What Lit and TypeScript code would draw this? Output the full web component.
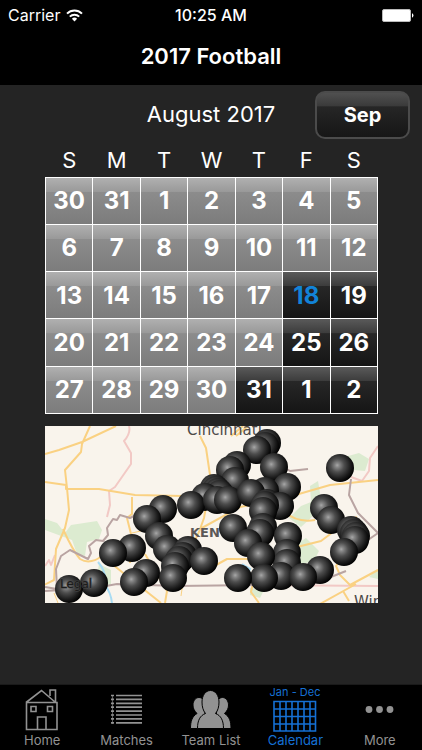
import { LitElement, html, css, svg } from "lit";
import { customElement, property, state } from "lit/decorators.js";
import { classMap } from "lit/directives/class-map.js";

const WEEKDAYS = [
  ["S", "Sunday"], ["M", "Monday"], ["T", "Tuesday"], ["W", "Wednesday"],
  ["T", "Thursday"], ["F", "Friday"], ["S", "Saturday"],
];

const WEEKS = [
  [30, 31, 1, 2, 3, 4, 5],
  [6, 7, 8, 9, 10, 11, 12],
  [13, 14, 15, 16, 17, 18, 19],
  [20, 21, 22, 23, 24, 25, 26],
  [27, 28, 29, 30, 31, 1, 2],
];

// Week and weekday of every date that has matches.
const MATCH_DAYS = new Set(["2-5", "2-6", "3-5", "3-6", "4-4", "4-5", "4-6"]);
const TODAY = "2-5";

// Venue pins, back to front.
const PINS: Array<[number, number]> = [
  [222, 17], [220, 20], [212, 24], [229, 41], [192, 39], [185, 44], [190, 55],
  [295, 42], [169, 62], [171, 64], [173, 66], [175, 68], [160, 71], [146, 79],
  [172, 74], [183, 74], [242, 61], [220, 65], [206, 67], [222, 77], [235, 80],
  [220, 79], [218, 85], [118, 83], [102, 93], [114, 110], [122, 123],
  [218, 101], [215, 107], [188, 102], [203, 117], [243, 110], [242, 127],
  [242, 137], [216, 130], [87, 122], [68, 127], [143, 124], [138, 130],
  [134, 134], [130, 140], [159, 135], [128, 152], [101, 147], [89, 156],
  [236, 150], [219, 152], [193, 152], [275, 144], [258, 151], [279, 82],
  [286, 94], [306, 104], [309, 107], [311, 110], [310, 114], [299, 126],
  [49, 157], [24, 163],
];

@customElement("status-bar")
export class StatusBar extends LitElement {
  static styles = css`
    :host {
      display: grid;
      grid-template-columns: 1fr auto 1fr;
      align-items: center;
      height: 30px;
      padding: 0 8px;
      font-size: 16px;
    }
    .carrier { display: flex; align-items: center; gap: 6px; }
    .time { font-weight: 500; }
    .battery { justify-self: end; }
    svg { display: block; }
  `;
  render() {
    return html`
      <span class="carrier">Carrier
        <svg width="17" height="13" viewBox="0 0 17 13" fill="none" stroke="#fff" stroke-width="2" role="img" aria-label="Wi-Fi">
          <path d="M1 4.6A10.6 10.6 0 0 1 16 4.6" />
          <path d="M3.8 7.6A6.8 6.8 0 0 1 13.2 7.6" />
          <path d="M8.5 12.4 5.9 9.8a3.7 3.7 0 0 1 5.2 0z" fill="#fff" stroke="none" />
        </svg>
      </span>
      <span class="time">10:25 AM</span>
      <svg class="battery" width="32" height="13" viewBox="0 0 32 13" role="img" aria-label="Battery full">
        <rect x="0.5" y="0.5" width="28" height="12" rx="1.5" fill="#fff" stroke="#bbb" stroke-width="1" />
        <path d="M30 4.3a2.4 2.4 0 0 1 0 4.4z" fill="#fff" />
      </svg>
    `;
  }
}

@customElement("month-calendar")
export class MonthCalendar extends LitElement {
  static styles = css`
    :host { display: block; padding: 0 44px 0 45px; }
    table {
      width: 100%;
      height: 275px;
      border-collapse: collapse;
      table-layout: fixed;
    }
    th {
      height: 38px;
      padding: 0 0 5px;
      box-sizing: border-box;
      font-size: 22px;
      font-weight: 400;
      vertical-align: bottom;
      line-height: 24px;
    }
    td { padding: 0; border: 1px solid #fff; height: 46px; }
    .day {
      display: block;
      width: 100%;
      height: 100%;
      margin: 0;
      padding: 0;
      border: 0;
      color: #fff;
      font: inherit;
      font-size: 24px;
      font-weight: 700;
      background: linear-gradient(#b0b0b0, #999 30%, #8c8c8c 31%, #7c7c7c);
    }
    .day.active { background: linear-gradient(#5a5a5a, #3c3c3c 30%, #272727 31%, #151515); }
    .day.today { color: #1283d8; }
  `;
  render() {
    return html`
      <table>
        <thead>
          <tr>${WEEKDAYS.map(([l, n]) => html`<th scope="col" abbr=${n}>${l}</th>`)}</tr>
        </thead>
        <tbody>
          ${WEEKS.map((week, w) => html`<tr>
            ${week.map((d, i) => {
              const key = `${w}-${i}`;
              return html`<td><button class=${classMap({ day: true, active: MATCH_DAYS.has(key), today: key === TODAY })}>${d}</button></td>`;
            })}
          </tr>`)}
        </tbody>
      </table>
    `;
  }
}

@customElement("venue-map")
export class VenueMap extends LitElement {
  static styles = css`
    :host { display: block; margin: 12px 44px 0 45px; }
    svg { display: block; width: 100%; height: auto; background: #f9f4ec; }
    .road { fill: none; stroke: #fad182; stroke-width: 2; stroke-linejoin: round; }
    .minor { stroke-width: 1; }
    .border { fill: none; stroke: #b9a4a2; stroke-width: 2; stroke-linejoin: round; }
    .zone { fill: none; stroke: #f2c9c5; stroke-width: 2; stroke-linejoin: round; }
    .park { fill: #dcebd0; }
    .river { fill: none; stroke: #a9dcf3; stroke-width: 2; }
    .label { font-family: "DejaVu Sans", sans-serif; font-size: 15px; font-weight: 400; fill: #4c4948; }
    .region { font-size: 13px; font-weight: 700; fill: #5c5857; }
    .legal {
      font-family: "DejaVu Sans", sans-serif;
      font-size: 12px;
      fill: #1c1c1c;
      stroke: #4a4a4a;
      stroke-width: 1;
      paint-order: stroke;
    }
  `;
  render() {
    return html`
      <svg viewBox="0 0 333 177" role="img" aria-label="Map of match venues in Kentucky">
        <defs>
          <radialGradient id="ball" cx="0.42" cy="0.42" r="0.6" fx="0.4" fy="0.4">
            <stop offset="0" stop-color="#a8a8a8" />
            <stop offset="0.12" stop-color="#888" />
            <stop offset="0.4" stop-color="#4d4d4d" />
            <stop offset="0.75" stop-color="#1e1e1e" />
            <stop offset="1" stop-color="#000" />
          </radialGradient>
        </defs>
        <path class="park" d="M0 93l12 4 8 10 6-8 26-4 5 9-3 9-12 3-2 14-8-2-5-14-27-10z" />
        <path class="park" d="M54 138l12 6v14l-8 6-6-14z" />
        <path class="park" d="M296 32l18-5 10 6-4 12-22-2z" />
        <path class="park" d="M265 60l8-5 2 12-6 22-13 12-12-9 12-12 10-4z" />
        <path class="park" d="M252 118l9-6 13 13-5 10-20 5z" />
        <path class="park" d="M205 162l14 2-4 8-10-3z" />
        <path class="park" d="M324 151l9-8v10z" />
        <path class="river" d="M53 136q9 10 7 23 6 8 7 18M197 138l8 5-3 7" />
        <path class="zone" d="M84 0q2 7-5 15l7 12v11L70 61l-6 4 1 14-3 12M0 140l4-6 2 5 4-10M211 159l122 1M333 20l-8 12-1 13-7 10-11-4" />
        <path class="road" d="M0 28l14-4 23-8 34-16M45 0l-8 18-1 8-16 18 2 18 2 22-4 18-9 21-2 31-10 5M0 56l21 3v4h33l36 6 48 1 50-5M87 71v17l-5 4 5 20-2 25M18 103q10 22 17 30 10 6 22-3l20 16 39 31" />
        <path class="road" d="M155 10l6 12 4 27-1 15-5 28-5 14-9 18M186 10l12-10M191 10l12-10M191 56l22 8M155 103l40-22 45-9 45-13 48-5M240 86q12 11 30 8M162 144l20-11h22l32-8 40-10 24-18 12-6M100 128l22 37-2 12M214 177l-8-11 3-14M297 132l-6 8 4 9 10 10 28-15M311 158l-36 20M298 165l6 10" />
        <path class="road minor" d="M9 167l4 10M112 75l-8 28-17 4M163 69l-24 21M136 170l5-34" />
        <path class="border" d="M0 161l12 2-1-20 5-13 9-6 18 9 3-6-2-7 7-6 7 1 5-6-1-7 6-9 4 1 3-5 10 3 6-3 6-1 9-2M0 165l50-3 22-4 60 2 79-1 60-2 30-12M190 42l9-7h20l9 8 6-5 11 7 18-2M274 40l0 0M306 53l-2 16 9 18 20 20-13 9" />
        <text class="label" x="142" y="9">Cincinnati</text>
        <text class="label region" x="145" y="111">KENTUCKY</text>
        <text class="label" x="309" y="181">Winston</text>
        ${PINS.map(([x, y]) => svg`<circle cx=${x} cy=${y} r="14" fill="url(#ball)" />`)}
        <text class="legal" x="15" y="162">Legal</text>
      </svg>
    `;
  }
}

@customElement("tab-bar")
export class TabBar extends LitElement {
  @property() selected = "Calendar";

  static styles = css`
    :host { display: block; background: #000; border-top: 1px solid #1a1a1a; }
    nav { display: grid; grid-template-columns: repeat(5, 1fr); }
    a {
      display: flex;
      flex-direction: column;
      align-items: center;
      height: 65px;
      color: #929292;
      font-size: 13px;
      line-height: 16px;
      text-decoration: none;
    }
    a.on { color: #1570d4; }
    svg { display: block; width: 52px; height: 47px; }
    .caption { font-size: 11px; fill: currentColor; }
  `;

  private icons: Record<string, unknown> = {
    Home: svg`<g fill="none" stroke="#929292" stroke-width="1.6">
      <path d="M10.500 17.500h30.500V44.500H10.500zM10 17.500 25.500 5.500 39 17M34 11V5h5.500v12" />
      <path d="M15 21.500h5v5h-5zM31.500 21.500h5v5h-5zM21.500 44.500V32h8.500v12.500" />
    </g>`,
    Matches: svg`<g stroke="#929292" stroke-width="1.7" fill="none">
      ${[0, 1, 2, 3, 4, 5, 6, 7].map((i) => svg`<path d=${`M10 ${10.5 + i * 3.9}h3M15 ${10.5 + i * 3.9}h26`} />`)}
      <path d="M11.500 10v29" stroke-width="0.6" />
    </g>`,
    "Team List": svg`<g fill="#929292" stroke="#000" stroke-width="1">
      <path d="M5.500 43.500c0-7 1.500-12 6.500-15-3-3-4-5.500-4-8.500 0-4 2.500-7.500 6-7.500s6 3.500 6 7.500v23.500z" />
      <path d="M46 43.500c0-7-1.500-12-6.500-15 3-3 4-5.500 4-8.500 0-4-2.500-7.500-6-7.500s-6 3.500-6 7.500v23.500z" />
      <path d="M12.500 43.500c0-8 2.500-13 8-15-2.500-3-3.500-7-3.500-11.500 0-6.500 3.500-11.500 8.500-11.500s8.500 5 8.500 11.500c0 4.500-1 8.500-3.500 11.500 5.500 2 8 7 8 15z" />
    </g>`,
    Calendar: svg`
      <text class="caption" x="26" y="11" text-anchor="middle">Jan - Dec</text>
      <g fill="none" stroke="#1570d4" stroke-width="1.6">
        <path d="M5 16.500h41.500v29.500H5zM5 24h42M5 31.500h42M5 39h42M11 16.500v29.500M17 16.500v29.500M23 16.500v29.500M29 16.500v29.500M35 16.500v29.500M41 16.500v29.500" />
      </g>`,
    More: svg`<g fill="#929292">
      <circle cx="15" cy="24.500" r="3.400" /><circle cx="25.500" cy="24.500" r="3.400" /><circle cx="36" cy="24.500" r="3.400" />
    </g>`,
  };

  render() {
    return html`<nav>
      ${Object.keys(this.icons).map((name) => html`
        <a href="#" class=${classMap({ on: name === this.selected })}>
          <svg viewBox="0 0 52 47" aria-hidden="true">${this.icons[name]}</svg>
          <span>${name}</span>
        </a>`)}
    </nav>`;
  }
}

@customElement("app-root")
export class AppRoot extends LitElement {
  @state() private tab = "Calendar";

  static styles = css`
    :host {
      display: flex;
      flex-direction: column;
      min-height: 100vh;
      background: #242424;
      color: #fff;
      font-family: Inter, "Liberation Sans", sans-serif;
    }
    header { background: #000; }
    h1 {
      margin: 0;
      height: 55px;
      line-height: 52px;
      font-size: 22px;
      font-weight: 600;
      text-align: center;
    }
    main { flex: 1; }
    .month {
      display: grid;
      grid-template-columns: 1fr auto 1fr;
      align-items: start;
      padding: 6px 12px 0;
    }
    h2 {
      grid-column: 2;
      margin: 0;
      font-size: 22px;
      line-height: 46px;
      font-weight: 400;
    }
    .next {
      justify-self: end;
      width: 95px;
      height: 48px;
      padding: 0;
      border: 2px solid #4b4b4b;
      border-radius: 10px;
      background: linear-gradient(#505050, #3a3a3a 30%, #262626 31%, #161616);
      color: #fff;
      font: inherit;
      font-size: 20px;
      font-weight: 700;
    }
  `;

  render() {
    return html`
      <header>
        <status-bar></status-bar>
        <h1>2017 Football</h1>
      </header>
      <main>
        <div class="month">
          <h2>August 2017</h2>
          <button class="next">Sep</button>
        </div>
        <month-calendar></month-calendar>
        <venue-map></venue-map>
      </main>
      <tab-bar .selected=${this.tab}></tab-bar>
    `;
  }
}
